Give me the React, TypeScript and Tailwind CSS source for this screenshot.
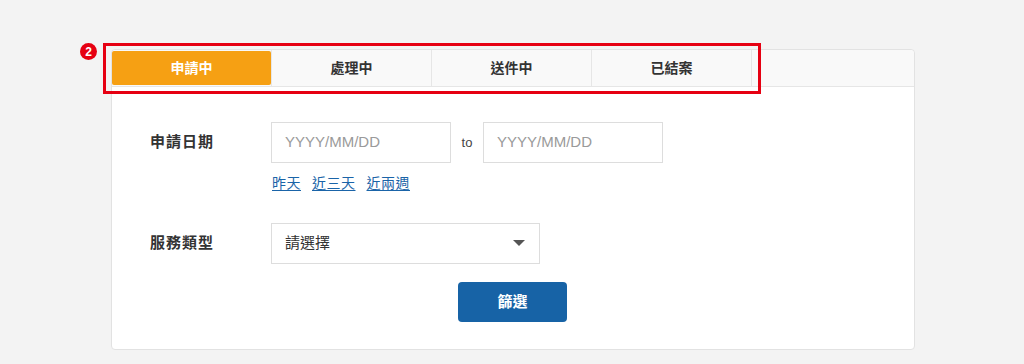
const tabs = ["申請中", "處理中", "送件中", "已結案"];

function Tab({ label, active }: { label: string; active: boolean }) {
  if (active) {
    return (
      <div className="w-[160px] h-full py-[1px] border-r border-[#e6e6e6]">
        <div className="h-full bg-[#f6a013] rounded-[2px] flex items-center justify-center text-white text-[14px] font-bold">
          {label}
        </div>
      </div>
    );
  }
  return (
    <div className="w-[160px] h-full border-r border-[#e6e6e6] flex items-center justify-center text-[#333] text-[14px] font-bold">
      {label}
    </div>
  );
}

function DateInput() {
  return (
    <div className="w-[180px] h-[41px] border border-[#dddddd] bg-white flex items-center px-[13px] text-[15px] text-[#9a9a9a]">
      YYYY/MM/DD
    </div>
  );
}

export default function App() {
  return (
    <div
      className="w-full h-[364px] bg-[#f3f3f3] pt-[49px] pl-[111px]"
      style={{ fontFamily: '"Liberation Sans", "Noto Sans CJK TC", sans-serif' }}
    >
      <div className="relative w-[804px] h-[301px] bg-white border border-[#e2e2e2] rounded-[4px]">
        {/* tab bar */}
        <div className="h-[37px] bg-[#f9f9f9] border-b border-[#e6e6e6] rounded-t-[4px] flex">
          {tabs.map((t, i) => (
            <Tab key={t} label={t} active={i === 0} />
          ))}
        </div>

        {/* annotation */}
        <div className="absolute left-[-9px] top-[-7px] w-[658px] h-[51px] border-[3px] border-[#e60012] pointer-events-none" />
        <div className="absolute left-[-32px] top-[-7px] w-[17px] h-[17px] rounded-full bg-[#e60012] text-white text-[12px] font-bold flex items-center justify-center">
          2
        </div>

        {/* form */}
        <div className="pl-[38px] pt-[35px]">
          <div className="flex items-center">
            <div className="w-[121px] text-[15px] font-bold text-[#333] tracking-[1px]">申請日期</div>
            <DateInput />
            <div className="w-[32px] text-center text-[13px] text-[#444]">to</div>
            <DateInput />
          </div>
          <div className="pl-[122px] mt-[10px] flex gap-[11px] text-[14px] text-[#1a64a8] tracking-[0.5px]">
            <span className="underline underline-offset-2">昨天</span>
            <span className="underline underline-offset-2">近三天</span>
            <span className="underline underline-offset-2">近兩週</span>
          </div>

          <div className="flex items-center mt-[29px]">
            <div className="w-[121px] text-[15px] font-bold text-[#333] tracking-[1px]">服務類型</div>
            <div className="w-[269px] h-[41px] border border-[#dddddd] bg-white flex items-center justify-between pl-[13px] pr-[14px] text-[15px] text-[#333]">
              <span>請選擇</span>
              <svg width="12" height="7" viewBox="0 0 12 7">
                <path d="M0 0 L12 0 L6 6 Z" fill="#555" />
              </svg>
            </div>
          </div>

          <div className="flex mt-[18px] pl-[308px]">
            <div className="w-[109px] h-[40px] bg-[#1763a6] rounded-[4px] text-white text-[15px] font-bold flex items-center justify-center">
              篩選
            </div>
          </div>
        </div>
      </div>
    </div>
  );
}
